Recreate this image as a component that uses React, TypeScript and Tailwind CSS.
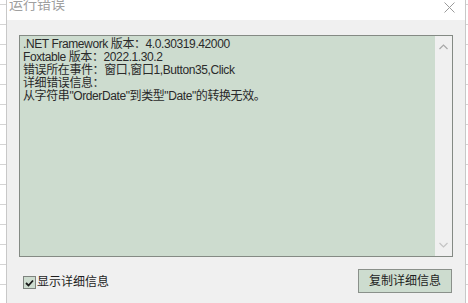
import React from 'react'

// 运行错误对话框 (Foxtable 风格)
const FONT = '"Liberation Sans", "Noto Sans CJK SC", sans-serif'

const lines = [
  '.NET Framework 版本：4.0.30319.42000',
  'Foxtable 版本：2022.1.30.2',
  '错误所在事件：窗口,窗口1,Button35,Click',
  '详细错误信息：',
  '从字符串"OrderDate"到类型"Date"的转换无效。',
]

export default function App() {
  return (
    <div
      className="w-[468px] h-[303px] overflow-hidden flex bg-white bg-[repeating-linear-gradient(to_bottom,transparent_0px,transparent_4px,#d4d4d4_4px,#d4d4d4_5px,transparent_5px,transparent_20px)]"
      style={{ fontFamily: FONT }}
    >
      <div className="w-[6px] shrink-0" />
      <div className="w-[460px] h-full border-x border-[#c8c8c8] flex flex-col bg-[#f0f0f0]">
        {/* title bar */}
        <div className="h-[20px] bg-white flex items-start justify-between overflow-hidden">
          <span className="ml-[2px] -mt-[6px] text-[14px] leading-[20px] text-[#a0a0a0]">运行错误</span>
          <svg width="11" height="11" viewBox="0 0 11 11" className="mt-[2px] mr-[10px]">
            <path d="M0.5 0.5 L10.5 10.5 M10.5 0.5 L0.5 10.5" stroke="#9a9a9a" strokeWidth="1" fill="none" />
          </svg>
        </div>

        {/* detail box */}
        <div className="mt-[15px] ml-[12px] w-[434px] h-[222px] border border-[#848a84] bg-[#cddccf] flex">
          <div className="flex-1 pl-[3px] pt-[2px] text-[12px] leading-[13px] tracking-[-0.4px] text-[#2a2a2a]">
            {lines.map((l) => (
              <div key={l} className="whitespace-nowrap">{l}</div>
            ))}
          </div>
          <div className="w-[17px] bg-[#f0f0f0] flex flex-col items-center justify-between py-[8px]">
            <svg width="9" height="6" viewBox="0 0 9 6">
              <path d="M0.5 5 L4.5 1 L8.5 5" stroke="#a8a8a8" strokeWidth="1.2" fill="none" />
            </svg>
            <svg width="9" height="6" viewBox="0 0 9 6">
              <path d="M0.5 1 L4.5 5 L8.5 1" stroke="#c4c4c4" strokeWidth="1.2" fill="none" />
            </svg>
          </div>
        </div>

        {/* bottom row */}
        <div className="mt-[12px] ml-[16px] mr-[13px] flex items-start justify-between">
          <label className="mt-[7px] flex items-center gap-[1px] text-[12px] leading-[13px] text-[#1e1e1e]">
            <span className="w-[13px] h-[13px] border border-[#7e837e] bg-[#cddccf] flex items-center justify-center">
              <svg width="9" height="8" viewBox="0 0 9 8">
                <path d="M1 4 L3.5 6.5 L8 1.5" stroke="#1a1a1a" strokeWidth="1.8" fill="none" />
              </svg>
            </span>
            显示详细信息
          </label>
          <button className="w-[94px] h-[24px] border border-[#8a908a] bg-[#cddccf] text-[12px] text-[#1e1e1e] flex items-center justify-center">
            复制详细信息
          </button>
        </div>
      </div>
    </div>
  )
}
